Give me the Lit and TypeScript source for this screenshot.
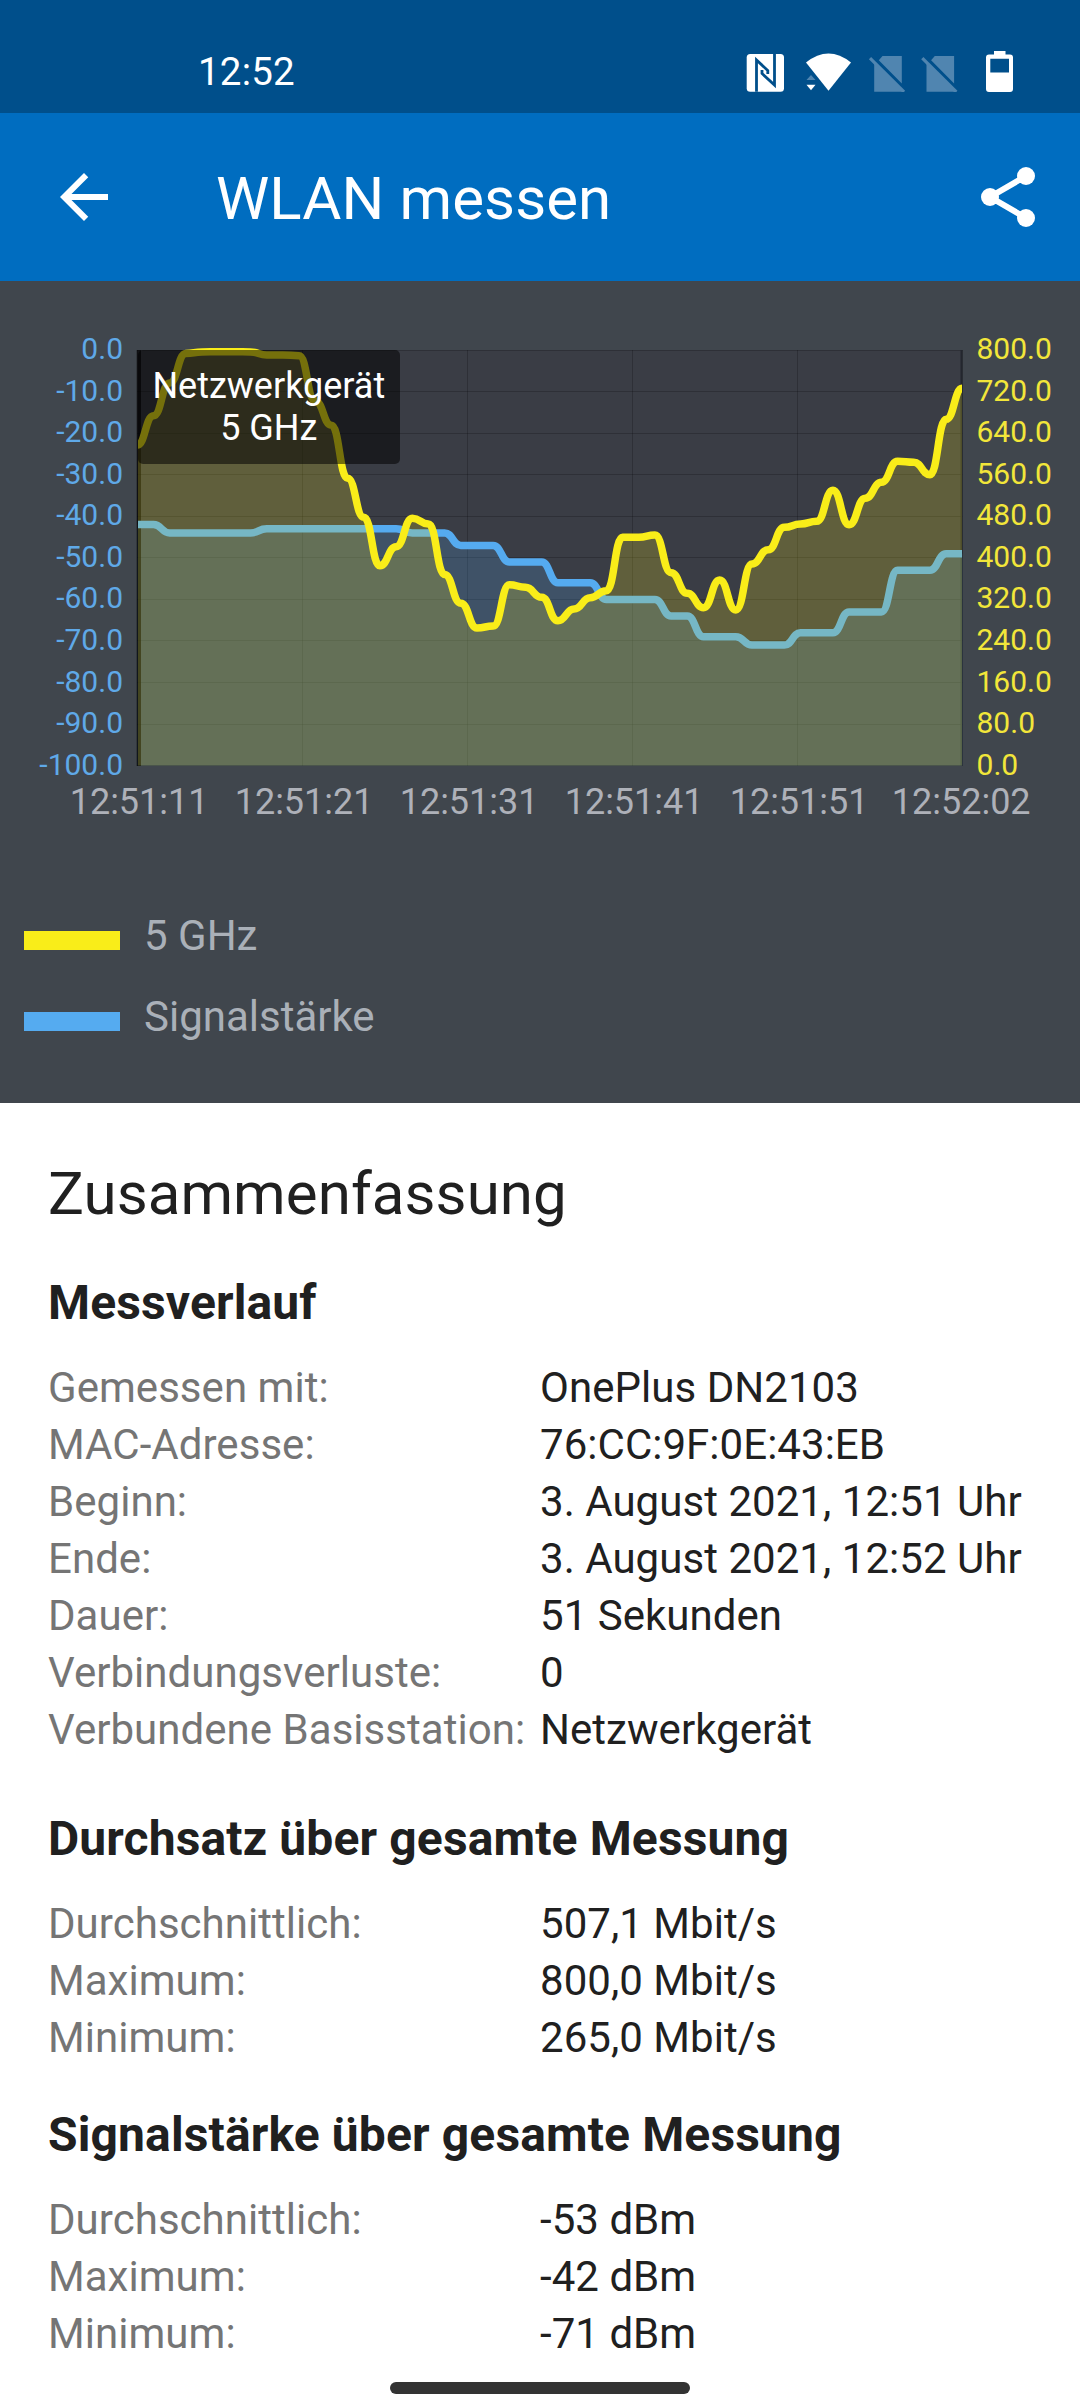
import { LitElement, html, svg, css } from "lit";
import { customElement } from "lit/decorators.js";

type Point = [number, number];

const PLOT = { left: 137.3, right: 962.3, top: 70, bottom: 485.7 };

// Signal strength in dBm, one sample per second
const signal = [
  -42, -42, -44, -44, -44, -44, -44, -44, -43, -43, -43, -43, -43, -43, -43, -43, -43, -44, -44, -44,
  -47, -47, -47, -51, -51, -51, -56, -56, -56, -60, -60, -60, -60, -64, -64, -69, -69, -69, -71, -71,
  -71, -68, -68, -68, -63, -63, -63, -53, -53, -53, -49, -49,
];

// Throughput curve as heights below the top of the panel
const throughput = [
  165, 135.7, 103, 73.5, 72, 71.7, 71.7, 72, 75, 75, 75.7, 121, 145.3, 198.3, 237.3, 285.7, 266.7, 238.3,
  244, 294.5, 323.3, 348, 346, 304.7, 307.3, 317.3, 340.7, 329, 317.7, 310.7, 257.3, 257.3, 255, 292.7,
  313.3, 327.7, 300, 330, 284, 269.7, 247.3, 244, 241.3, 210.3, 244.7, 218.3, 202.3, 181.3, 182.3, 194.7,
  139.3, 108.3,
];

const toPoints = (ys: number[]): Point[] =>
  ys.map((y, i) => [PLOT.left + ((PLOT.right - PLOT.left) * i) / (ys.length - 1), y]);

const curve = (pts: Point[]): string =>
  pts.reduce((d, [x, y], i) => {
    if (i === 0) return `M${x.toFixed(1)} ${y.toFixed(1)}`;
    const [px, py] = pts[i - 1];
    const cx = ((px + x) / 2).toFixed(1);
    return `${d}C${cx} ${py.toFixed(1)} ${cx} ${y.toFixed(1)} ${x.toFixed(1)} ${y.toFixed(1)}`;
  }, "");

const area = (d: string): string => `${d}V${PLOT.bottom}H${PLOT.left}Z`;

@customElement("status-bar")
class StatusBar extends LitElement {
  static styles = css`
    :host { display: flex; box-sizing: border-box; height: 113px; padding: 32px 64px 0 198px;
      align-items: flex-start; justify-content: space-between; background: #004f8b; color: #fff; }
    .time { font-size: 38.5px; line-height: 80px; letter-spacing: 0.2px; }
    .icons { display: block; width: 274px; height: 60px; }
  `;
  render() {
    const sim = (x: number) => svg`<g transform="translate(${x} 32)">
      <path fill="#5085b0" d="M13.500 24H32.800V51.500L9.800 28.200zM5.200 30.500L32.800 58.500V59.700H5.200z"/>
      <path d="M1 26.200L35 60" fill="none" stroke="#5085b0" stroke-width="3.200"/>
    </g>`;
    return html`
      <span class="time">12:52</span>
      <svg class="icons" viewBox="742 32 274 60">
        <rect x="746.700" y="54" width="37.300" height="37.700" rx="3.500" fill="#fff"/>
        <path d="M756.500 91.700V60L767.800 70.500V74" fill="none" stroke="#004f8b" stroke-width="2.800"/>
        <path d="M774.500 54V85L762 73.500V70" fill="none" stroke="#004f8b" stroke-width="2.800"/>
        <path d="M806 62.500Q828.500 44.500 851 62.500L828.500 90.800z" fill="#fff"/>
        <path d="M806.500 80L811 75L815.500 80z" fill="#5085b0"/>
        <path d="M806.500 84.800H815.500L811 90.200z" fill="#fff"/>
        ${sim(869)}${sim(921.3)}
        <path fill="#fff" fill-rule="evenodd" d="M994 51h11.500v3.500h4.500a3 3 0 0 1 3 3V89a3 3 0 0 1-3 3H989a3 3 0 0 1-3-3V57.500a3 3 0 0 1 3-3h5zM990.300 58.700V72.500H1009V58.700z"/>
      </svg>`;
  }
}

@customElement("title-bar")
class TitleBar extends LitElement {
  static styles = css`
    :host { display: flex; box-sizing: border-box; height: 168px; padding: 0 36px 0 48px;
      align-items: center; background: #006dc0; color: #fff; }
    .icon { display: block; width: 72px; height: 72px; fill: #fff; }
    .title { flex: 1; margin: 4px 0 0 96px; font-size: 60px; line-height: 70px; font-weight: 400; letter-spacing: 0.1px; }
  `;
  render() {
    return html`
      <svg class="icon" viewBox="0 0 24 24"><path d="M20 11H7.830l5.590-5.590L12 4l-8 8 8 8 1.410-1.410L7.830 13H20z"/></svg>
      <h1 class="title">WLAN messen</h1>
      <svg class="icon" viewBox="0 0 24 24">
        <path d="M18 5L6 12L18 19" fill="none" stroke="#fff" stroke-width="2"/>
        <circle cx="18" cy="5" r="3"/><circle cx="6" cy="12" r="3"/><circle cx="18" cy="19" r="3"/>
      </svg>`;
  }
}

@customElement("measure-chart")
class MeasureChart extends LitElement {
  static styles = css`
    :host { display: flex; flex-direction: column; box-sizing: border-box; height: 822px; background: #40464d; }
    .chart { display: block; width: 1080px; height: 620px; }
    .plot { fill: #3a3d45; }
    .grid { stroke: #000; stroke-opacity: 0.2; stroke-width: 1; }
    .axis { fill: #000; fill-opacity: 0.65; }
    .edge { fill: #23262e; }
    .line { fill: none; stroke-width: 7.500; stroke-linejoin: round; }
    .blue { stroke: #55abf0; }
    .yellow { stroke: #f9ed19; }
    .blue-area { fill: #55abf0; fill-opacity: 0.2; }
    .yellow-area { fill: #f9ed19; fill-opacity: 0.2; }
    .marker { fill: #000; fill-opacity: 0.53; }
    .marker-text { fill: #fff; font-size: 36px; text-anchor: middle; }
    .left-label { fill: #5fa9e8; font-size: 30px; text-anchor: end; }
    .right-label { fill: #f2e63a; font-size: 30px; }
    .time-label { fill: #aeb1b9; font-size: 36px; text-anchor: middle; }
    .legend { display: flex; flex-direction: column; gap: 32px; padding: 10px 0 0 24px; }
    .entry { display: flex; align-items: center; gap: 24px; font-size: 42px; line-height: 49px; color: #aab0b8; }
    .swatch { width: 96px; height: 19px; margin-top: 9px; }
    .swatch-yellow { background: #f9ed19; }
    .swatch-blue { background: #55abf0; }
  `;
  render() {
    const h = PLOT.bottom - PLOT.top;
    const w = PLOT.right - PLOT.left;
    const blue = curve(toPoints(signal.map((v) => PLOT.top - (v * h) / 100)));
    const yellow = curve(toPoints(throughput));
    const rows = Array.from({ length: 11 }, (_, i) => i);
    const times = ["12:51:11", "12:51:21", "12:51:31", "12:51:41", "12:51:51", "12:52:02"];
    return html`
      <svg class="chart" viewBox="0 1 1080 620">
        <defs><clipPath id="plot-clip"><rect x="138" y="60" width="824" height="425.700"/></clipPath></defs>
        <rect class="plot" x="137" y="70" width="825.500" height="415.700"/>
        ${rows.map((i) => svg`<line class="grid" x1="137" x2="962.5" y1=${Math.floor(PLOT.top + (h * i) / 10) + 0.5} y2=${Math.floor(PLOT.top + (h * i) / 10) + 0.5}/>`)}
        ${times.map((_, i) => svg`<line class="grid" y1="70" y2="485.7" x1=${Math.round(PLOT.left + (w * i) / 5) + 0.5} x2=${Math.round(PLOT.left + (w * i) / 5) + 0.5}/>`)}
        <rect class="edge" x="960.500" y="70" width="2" height="415.700"/>
        <path class="blue-area" d=${area(blue)}/>
        <rect class="axis" x="136.700" y="70" width="4.300" height="416"/>
        <g clip-path="url(#plot-clip)">
          <path class="line blue" d=${blue}/>
          <path class="yellow-area" d=${area(yellow)}/>
          <path class="line yellow" d=${yellow}/>
        </g>
        <rect class="marker" x="138" y="70" width="262" height="114" rx="5"/>
        <text class="marker-text" x="268.800" y="118">Netzwerkgerät</text>
        <text class="marker-text" x="268.800" y="160">5 GHz</text>
        ${rows.map((i) => svg`<text class="left-label" x="123" y=${79 + (h * i) / 10}>${i === 0 ? "0.0" : `-${i * 10}.0`}</text>`)}
        ${rows.map((i) => svg`<text class="right-label" x="976.500" y=${79 + (h * i) / 10}>${800 - i * 80}.0</text>`)}
        ${times.map((t, i) => svg`<text class="time-label" x=${i < 5 ? PLOT.left + 1.8 + (w * i) / 5 : 961.2} y="534">${t}</text>`)}
      </svg>
      <div class="legend">
        <div class="entry"><span class="swatch swatch-yellow"></span>5 GHz</div>
        <div class="entry"><span class="swatch swatch-blue"></span>Signalstärke</div>
      </div>`;
  }
}

const sections: { title: string; rows: [string, string][] }[] = [
  {
    title: "Messverlauf",
    rows: [
      ["Gemessen mit:", "OnePlus DN2103"],
      ["MAC-Adresse:", "76:CC:9F:0E:43:EB"],
      ["Beginn:", "3. August 2021, 12:51 Uhr"],
      ["Ende:", "3. August 2021, 12:52 Uhr"],
      ["Dauer:", "51 Sekunden"],
      ["Verbindungsverluste:", "0"],
      ["Verbundene Basisstation:", "Netzwerkgerät"],
    ],
  },
  {
    title: "Durchsatz über gesamte Messung",
    rows: [
      ["Durchschnittlich:", "507,1 Mbit/s"],
      ["Maximum:", "800,0 Mbit/s"],
      ["Minimum:", "265,0 Mbit/s"],
    ],
  },
  {
    title: "Signalstärke über gesamte Messung",
    rows: [
      ["Durchschnittlich:", "-53 dBm"],
      ["Maximum:", "-42 dBm"],
      ["Minimum:", "-71 dBm"],
    ],
  },
];

@customElement("measure-summary")
class MeasureSummary extends LitElement {
  static styles = css`
    :host { display: block; flex: 1; padding: 56px 48px 0; color: #202020; }
    .heading { margin: 0; font-size: 60px; line-height: 70px; font-weight: 400; letter-spacing: 0.08px; }
    .section { margin-top: 41px; }
    .section:first-of-type { margin-top: 46px; margin-bottom: 53px; }
    .subtitle { margin: 0 0 28px; font-size: 48px; line-height: 56px; font-weight: 700; letter-spacing: 0.13px; }
    .row { display: grid; grid-template-columns: 492px 1fr; font-size: 42px; line-height: 57px; letter-spacing: 0.04px; white-space: nowrap; }
    .label { color: #757575; }
  `;
  render() {
    return html`
      <h2 class="heading">Zusammenfassung</h2>
      ${sections.map((s) => html`
        <section class="section">
          <h3 class="subtitle">${s.title}</h3>
          ${s.rows.map(([k, v]) => html`<div class="row"><span class="label">${k}</span><span>${v}</span></div>`)}
        </section>`)}`;
  }
}

@customElement("app-root")
class AppRoot extends LitElement {
  static styles = css`
    :host { display: flex; flex-direction: column; position: relative; width: 1080px; height: 2400px;
      overflow: hidden; background: #fff; font-family: Roboto, sans-serif; }
    .home { position: absolute; left: 390px; bottom: 6px; width: 300px; height: 12px; border-radius: 6px; background: #333; }
  `;
  render() {
    return html`
      <status-bar></status-bar>
      <title-bar></title-bar>
      <measure-chart></measure-chart>
      <measure-summary></measure-summary>
      <div class="home"></div>`;
  }
}
